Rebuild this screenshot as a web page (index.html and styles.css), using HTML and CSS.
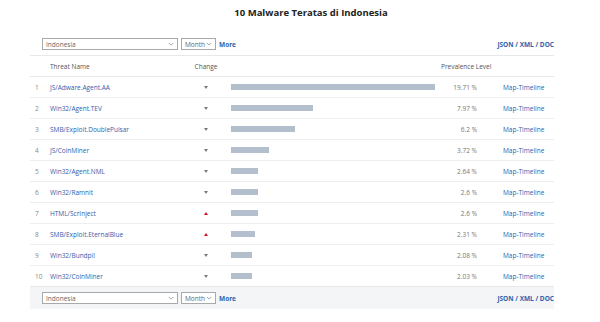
FILE: index.html
```html
<!DOCTYPE html>
<html lang="id">
<head>
<meta charset="UTF-8">
<meta name="viewport" content="width=device-width, initial-scale=1.0">
<title>10 Malware Teratas di Indonesia</title>
<link rel="stylesheet" href="styles.css">
</head>
<body>
<h1 class="title">10 Malware Teratas di Indonesia</h1>
<div class="panel">
<div class="toolbar">
<span class="pick country">Indonesia<svg viewBox="0 0 8 5"><path d="M1 1l3 3 3-3"/></svg></span>
<span class="pick period">Month<svg viewBox="0 0 8 5"><path d="M1 1l3 3 3-3"/></svg></span>
<a class="more" href="#">More</a>
<span class="formats"><a href="#">JSON</a> / <a href="#">XML</a> / <a href="#">DOC</a></span>
</div>
<table class="threats">
<colgroup>
<col class="c-num"><col class="c-name"><col class="c-change"><col class="c-bar"><col class="c-pct"><col class="c-link">
</colgroup>
<thead>
<tr><th></th><th>Threat Name</th><th class="mid">Change</th><th></th><th class="prev" colspan="2">Prevalence Level</th></tr>
</thead>
<tbody>
<tr><td class="num">1</td><td><a href="#">JS/Adware.Agent.AA</a></td><td class="mid"><span class="down"></span></td><td><div class="bar" style="width:204px"></div></td><td class="pct">19.71 %</td><td><a href="#">Map-Timeline</a></td></tr>
<tr><td class="num">2</td><td><a href="#">Win32/Agent.TEV</a></td><td class="mid"><span class="down"></span></td><td><div class="bar" style="width:82px"></div></td><td class="pct">7.97 %</td><td><a href="#">Map-Timeline</a></td></tr>
<tr><td class="num">3</td><td><a href="#">SMB/Exploit.DoublePulsar</a></td><td class="mid"><span class="down"></span></td><td><div class="bar" style="width:64px"></div></td><td class="pct">6.2 %</td><td><a href="#">Map-Timeline</a></td></tr>
<tr><td class="num">4</td><td><a href="#">JS/CoinMiner</a></td><td class="mid"><span class="down"></span></td><td><div class="bar" style="width:38px"></div></td><td class="pct">3.72 %</td><td><a href="#">Map-Timeline</a></td></tr>
<tr><td class="num">5</td><td><a href="#">Win32/Agent.NML</a></td><td class="mid"><span class="down"></span></td><td><div class="bar" style="width:27px"></div></td><td class="pct">2.64 %</td><td><a href="#">Map-Timeline</a></td></tr>
<tr><td class="num">6</td><td><a href="#">Win32/Ramnit</a></td><td class="mid"><span class="down"></span></td><td><div class="bar" style="width:27px"></div></td><td class="pct">2.6 %</td><td><a href="#">Map-Timeline</a></td></tr>
<tr><td class="num">7</td><td><a href="#">HTML/ScrInject</a></td><td class="mid"><span class="up"></span></td><td><div class="bar" style="width:27px"></div></td><td class="pct">2.6 %</td><td><a href="#">Map-Timeline</a></td></tr>
<tr><td class="num">8</td><td><a href="#">SMB/Exploit.EternalBlue</a></td><td class="mid"><span class="up"></span></td><td><div class="bar" style="width:24px"></div></td><td class="pct">2.31 %</td><td><a href="#">Map-Timeline</a></td></tr>
<tr><td class="num">9</td><td><a href="#">Win32/Bundpil</a></td><td class="mid"><span class="down"></span></td><td><div class="bar" style="width:21px"></div></td><td class="pct">2.08 %</td><td><a href="#">Map-Timeline</a></td></tr>
<tr><td class="num">10</td><td><a href="#">Win32/CoinMiner</a></td><td class="mid"><span class="down"></span></td><td><div class="bar" style="width:21px"></div></td><td class="pct">2.03 %</td><td><a href="#">Map-Timeline</a></td></tr>
</tbody>
</table>
<div class="toolbar footer">
<span class="pick country">Indonesia<svg viewBox="0 0 8 5"><path d="M1 1l3 3 3-3"/></svg></span>
<span class="pick period">Month<svg viewBox="0 0 8 5"><path d="M1 1l3 3 3-3"/></svg></span>
<a class="more" href="#">More</a>
<span class="formats"><a href="#">JSON</a> / <a href="#">XML</a> / <a href="#">DOC</a></span>
</div>
</div>
</body>
</html>
```
FILE: styles.css
```css
body {
margin: 0;
background: #fff;
font-family: "Open Sans", Arial, sans-serif;
color: #555;
}
.title {
margin: 6px 0 0;
padding-left: 22px;
text-align: center;
font-size: 9.5px;
line-height: 13px;
font-weight: 700;
color: #222;
}
.panel {
width: 524px;
margin: 14px 0 0 30px;
}
.toolbar {
display: flex;
align-items: center;
height: 22px;
padding-left: 12px;
border-bottom: 1px solid #e6e8eb;
font-size: 6.5px;
}
.toolbar.footer {
background: #f3f5f7;
border-bottom: none;
border-top: 1px solid #e6e8eb;
}
.pick {
display: flex;
align-items: center;
justify-content: space-between;
box-sizing: border-box;
height: 12px;
padding: 0 3px;
border: 1px solid #a9a9a9;
background: #fff;
color: #666;
margin-right: 3px;
}
.pick svg {
width: 6px;
height: 4px;
fill: none;
stroke: #888;
stroke-width: 1;
}
.country {
width: 136px;
}
.period {
width: 35px;
}
a {
color: #2f62ad;
text-decoration: none;
}
.more {
font-weight: 700;
}
.formats {
margin-left: auto;
font-weight: 700;
color: #2f62ad;
}
.threats {
width: 100%;
border-collapse: collapse;
table-layout: fixed;
font-size: 6.5px;
}
.c-num { width: 20px; }
.c-name { width: 136px; }
.c-change { width: 40px; }
.c-bar { width: 213px; }
.c-pct { width: 50px; }
.c-link { width: 65px; }
.threats th {
height: 20px;
padding: 0;
text-align: left;
font-weight: 400;
color: #555;
border-bottom: 1px solid #e6e8eb;
}
.threats td {
height: 20px;
padding: 0;
border-bottom: 1px solid #eceef0;
white-space: nowrap;
}
.threats tbody tr:last-child td {
border-bottom: none;
}
.threats .mid {
text-align: center;
}
.threats .prev {
padding-left: 2px;
}
.num {
padding-left: 5px !important;
color: #888;
}
.down,
.up {
display: inline-block;
width: 0;
height: 0;
border-left: 2.5px solid transparent;
border-right: 2.5px solid transparent;
vertical-align: middle;
}
.down {
border-top: 3px solid #7a7a7a;
}
.up {
border-bottom: 3px solid #d0102b;
}
.bar {
height: 6px;
margin-left: 5px;
background: #b3bfcc;
}
.pct {
text-align: right;
padding-right: 12px !important;
color: #777;
}
.threats td:last-child {
padding-left: 14px;
}
```
